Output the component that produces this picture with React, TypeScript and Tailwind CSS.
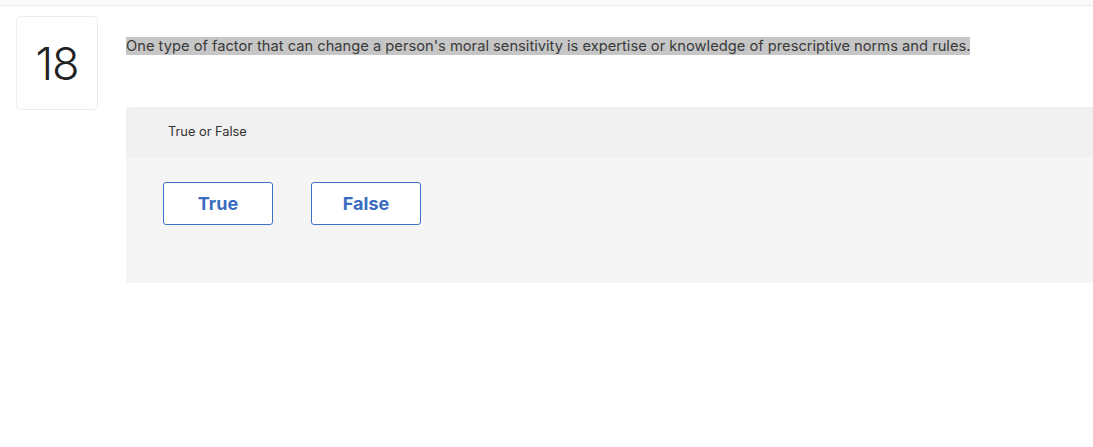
import React from "react";

export default function App() {
  return (
    <div className="w-[1093px] h-[447px] bg-white overflow-hidden font-['Inter',sans-serif] text-[#333]">
      {/* top strip */}
      <div className="h-[6px] bg-[#fafafa] border-b border-[#ececec]" />

      <div className="flex pl-[16px] pt-[10px]">
        {/* question number */}
        <div className="w-[82px] h-[94px] shrink-0 rounded-[5px] border border-[#ececec] flex items-center justify-center">
          <span className="text-[45px] leading-none font-light text-[#222] tracking-[-1px]">18</span>
        </div>

        <div className="flex-1 ml-[28px] pt-[20px]">
          <p className="text-[14.7px] leading-[21px]">
            <span className="bg-[#c6c6c6] text-[#3a3a3a]">
              One type of factor that can change a person's moral sensitivity is expertise or knowledge of prescriptive norms and rules.
            </span>
          </p>

          <div className="mt-[50px] rounded-l-[3px] overflow-hidden">
            <div className="h-[50px] bg-[#f0f0f0] flex items-center pl-[42px]">
              <span className="text-[12.8px] text-[#333]">True or False</span>
            </div>
            <div className="h-[126px] bg-[#f5f5f5] pl-[37px] pt-[25px]">
              <div className="flex gap-[38px]">
                <button className="w-[110px] h-[43px] bg-white border border-[#3f72c4] rounded-[3px] text-[18px] font-bold text-[#3a6cc0]">
                  True
                </button>
                <button className="w-[110px] h-[43px] bg-white border border-[#3f72c4] rounded-[3px] text-[18px] font-bold text-[#3a6cc0]">
                  False
                </button>
              </div>
            </div>
          </div>
        </div>
      </div>
    </div>
  );
}
